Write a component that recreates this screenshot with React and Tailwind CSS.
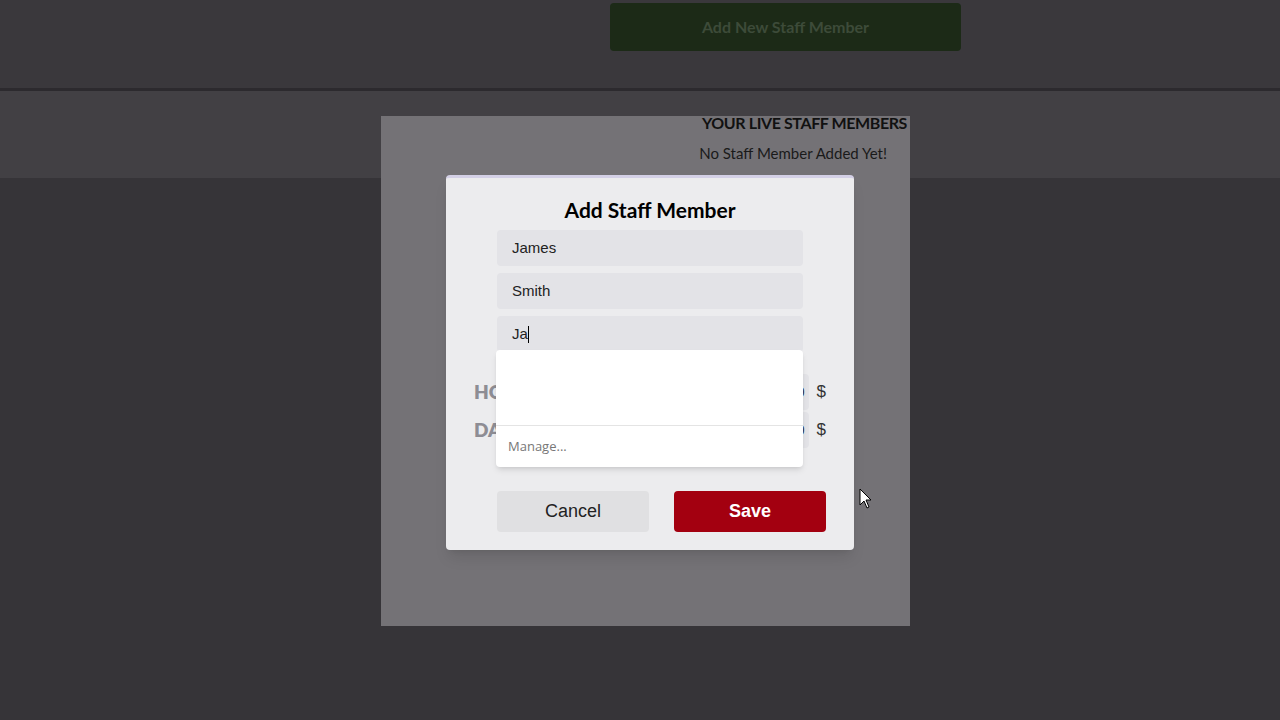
export default function App() {
  const f = { fontFamily: '"Liberation Sans", Arial, sans-serif' };
  const m = { fontFamily: 'Lato, "Noto Sans", sans-serif' };
  return (
    <div className="relative w-[1280px] h-[720px] overflow-hidden bg-[#363438]" style={f}>
      <div className="h-[88px] bg-[#3a383c] flex justify-end pr-[319px] pt-[3px]">
        <div className="w-[351px] h-[48px] rounded bg-[#1c2a17] flex items-center justify-center text-[16px] font-bold text-[#3d4b39]" style={m}>Add New Staff Member</div>
      </div>
      <div className="h-[3px] bg-[#2c2a2e]" />
      <div className="h-[87px] bg-[#424044]" />

      <div className="absolute left-[381px] top-[116px] w-[529px] h-[510px] bg-[#747276]" />
      <div className="absolute left-[665px] top-[111px] w-[242px] text-right" style={m}>
        <div className="text-[16px] font-bold text-[#111] tracking-tight">YOUR LIVE STAFF MEMBERS</div>
        <div className="text-[15px] text-[#1a1a1a] mt-[7px] pr-[20px]">No Staff Member Added Yet!</div>
      </div>

      <div className="absolute left-[446px] top-[175px] w-[408px] h-[375px] bg-[#ececee] rounded border-t-[3px] border-[#d4d0e6] shadow-lg">
        <div className="text-center text-[21px] font-bold text-black mt-[20px] leading-[24px]" style={m}>Add Staff Member</div>
        <div className="mx-[51px] mt-[8px] flex flex-col gap-[7px]">
          <div className="h-[36px] rounded bg-[#e3e3e7] px-[15px] flex items-center text-[15px] text-[#222]">James</div>
          <div className="h-[36px] rounded bg-[#e3e3e7] px-[15px] flex items-center text-[15px] text-[#222]">Smith</div>
          <div className="h-[36px] rounded bg-[#e3e3e7] px-[15px] flex items-center text-[15px] text-[#222]">Ja<span className="inline-block w-px h-[17px] bg-black" /></div>
        </div>
        <div className="mx-[28px] mt-[24px] flex flex-col gap-[6px]">
          <div className="flex items-center justify-between h-[32px]">
            <span className="text-[19px] font-extrabold text-[#8e8d94]" style={m}>HOURLY</span>
            <div className="flex items-center gap-[8px]"><div className="w-[38px] h-[36px] rounded bg-[#e3e3e7] text-right pr-1 pt-[8px] text-[14px] text-[#333]">0</div><span className="text-[17px] text-[#333]">$</span></div>
          </div>
          <div className="flex items-center justify-between h-[32px]">
            <span className="text-[19px] font-extrabold text-[#8e8d94]" style={m}>DAILY</span>
            <div className="flex items-center gap-[8px]"><div className="w-[38px] h-[36px] rounded bg-[#e3e3e7] text-right pr-1 pt-[8px] text-[14px] text-[#333]">0</div><span className="text-[17px] text-[#333]">$</span></div>
          </div>
        </div>
        <div className="absolute left-[50px] top-[172px] w-[307px] h-[117px] bg-white rounded shadow-md flex flex-col">
          <div className="h-[76px] border-b border-[#e4e4e4]" />
          <div className="flex-1 flex items-center px-[12px] text-[13px] text-[#777]" style={{ fontFamily: '"Open Sans", sans-serif' }}>Manage...</div>
        </div>
        <div className="absolute left-[51px] top-[313px] flex gap-[25px]">
          <div className="w-[152px] h-[41px] rounded bg-[#e0e0e2] flex items-center justify-center text-[18px] text-[#222]">Cancel</div>
          <div className="w-[152px] h-[41px] rounded bg-[#a30010] flex items-center justify-center text-[18px] font-bold text-white">Save</div>
        </div>
      </div>

      <svg className="absolute left-[859px] top-[488px]" width="14" height="22" viewBox="0 0 14 22">
        <path d="M1 1 L1 17 L5 13 L8 20 L10 19 L7 12 L12 12 Z" fill="white" stroke="black" strokeWidth="1" />
      </svg>
    </div>
  );
}
